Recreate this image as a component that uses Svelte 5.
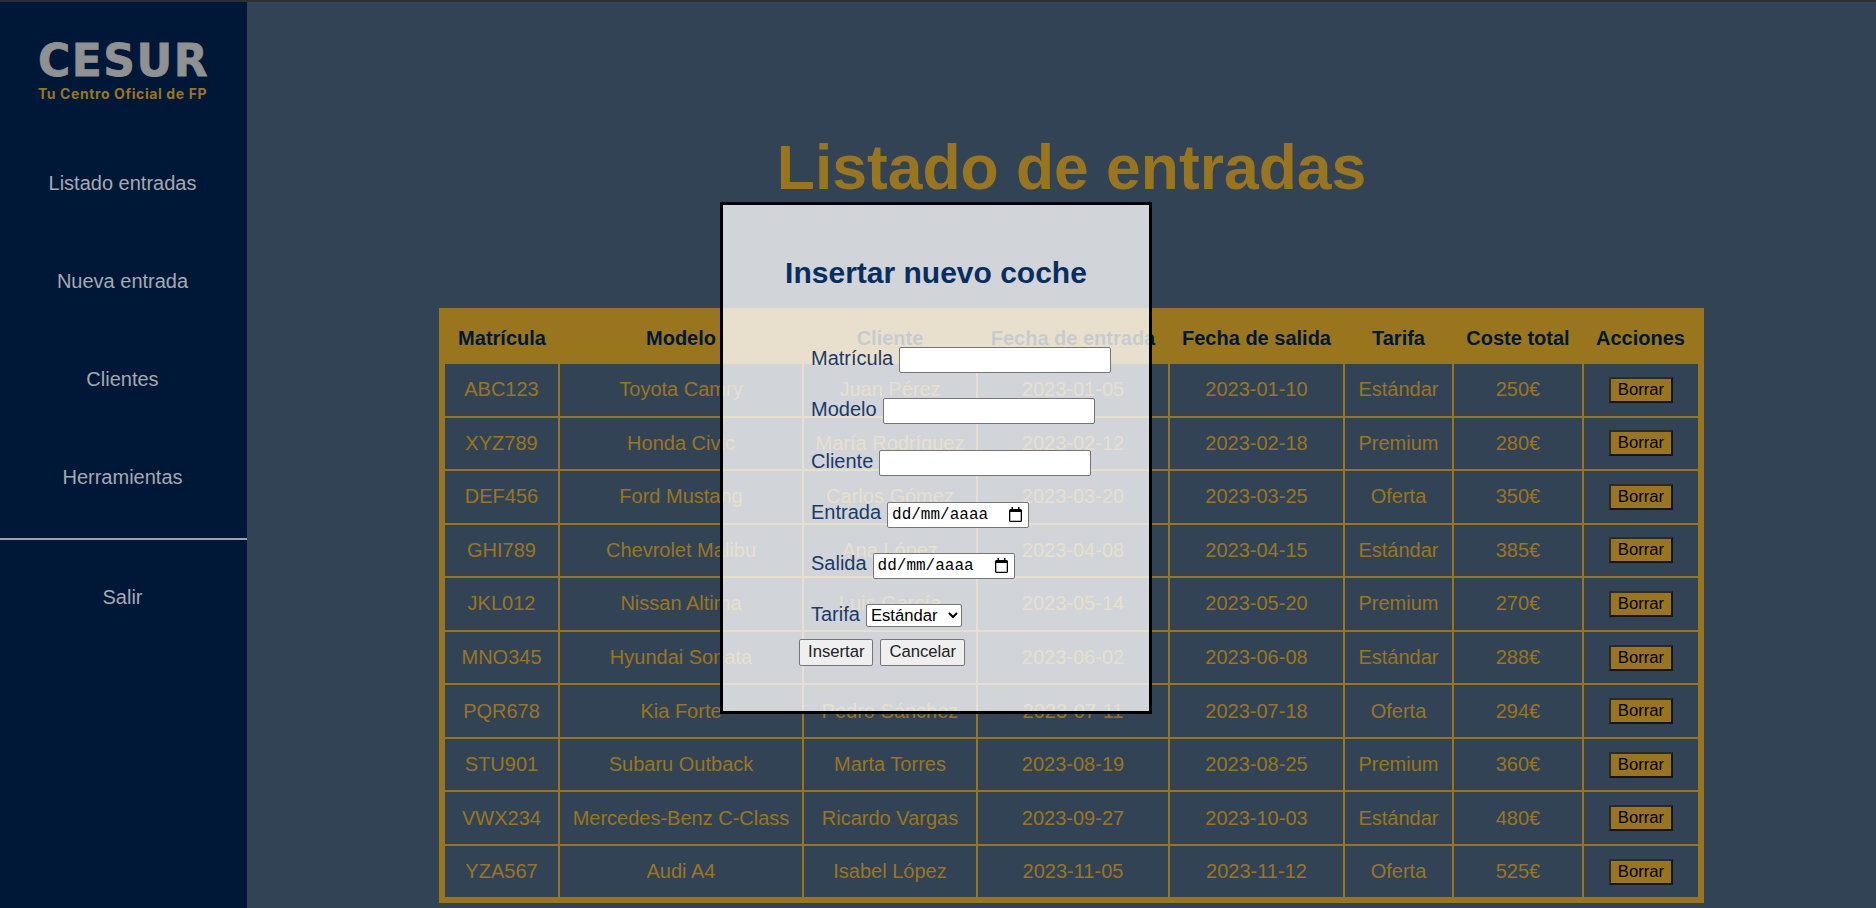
<script lang="ts">
	const entradas = [
		['ABC123', 'Toyota Camry', 'Juan Pérez', '2023-01-05', '2023-01-10', 'Estándar', 250],
		['XYZ789', 'Honda Civic', 'María Rodríguez', '2023-02-12', '2023-02-18', 'Premium', 280],
		['DEF456', 'Ford Mustang', 'Carlos Gómez', '2023-03-20', '2023-03-25', 'Oferta', 350],
		['GHI789', 'Chevrolet Malibu', 'Ana López', '2023-04-08', '2023-04-15', 'Estándar', 385],
		['JKL012', 'Nissan Altima', 'Luis García', '2023-05-14', '2023-05-20', 'Premium', 270],
		['MNO345', 'Hyundai Sonata', 'Laura Martínez', '2023-06-02', '2023-06-08', 'Estándar', 288],
		['PQR678', 'Kia Forte', 'Pedro Sánchez', '2023-07-11', '2023-07-18', 'Oferta', 294],
		['STU901', 'Subaru Outback', 'Marta Torres', '2023-08-19', '2023-08-25', 'Premium', 360],
		['VWX234', 'Mercedes-Benz C-Class', 'Ricardo Vargas', '2023-09-27', '2023-10-03', 'Estándar', 480],
		['YZA567', 'Audi A4', 'Isabel López', '2023-11-05', '2023-11-12', 'Oferta', 525]
	];
	const anchos = [117, 244, 174, 192, 175, 109, 130, 118];
	const columnas = ['Matrícula', 'Modelo', 'Cliente', 'Fecha de entrada', 'Fecha de salida', 'Tarifa', 'Coste total', 'Acciones'];
</script>

<div class="page">
	<aside class="sidebar">
		<div class="logo">
			<div class="logo-name">CESUR</div>
			<div class="logo-sub">Tu Centro Oficial de FP</div>
		</div>
		<nav>
			<a href="#listado">Listado entradas</a>
			<a href="#nueva">Nueva entrada</a>
			<a href="#clientes">Clientes</a>
			<a href="#herramientas">Herramientas</a>
		</nav>
		<hr />
		<a class="salir" href="#salir">Salir</a>
	</aside>

	<main>
		<h1>Listado de entradas</h1>
		<table>
			<colgroup>
				{#each anchos as w}
					<col style="width: {w}px" />
				{/each}
			</colgroup>
			<thead>
				<tr>
					{#each columnas as c}
						<th>{c}</th>
					{/each}
				</tr>
			</thead>
			<tbody>
				{#each entradas as e}
					<tr>
						<td>{e[0]}</td>
						<td>{e[1]}</td>
						<td>{e[2]}</td>
						<td>{e[3]}</td>
						<td>{e[4]}</td>
						<td>{e[5]}</td>
						<td>{e[6]}€</td>
						<td><button type="button" class="borrar">Borrar</button></td>
					</tr>
				{/each}
			</tbody>
		</table>
	</main>

	<div class="modal">
		<h2>Insertar nuevo coche</h2>
		<form>
			<div class="field"><label for="f-mat">Matrícula</label><input id="f-mat" type="text" /></div>
			<div class="field"><label for="f-mod">Modelo</label><input id="f-mod" type="text" /></div>
			<div class="field"><label for="f-cli">Cliente</label><input id="f-cli" type="text" /></div>
			{#each [['f-ent', 'Entrada'], ['f-sal', 'Salida']] as [id, nombre]}
				<div class="field">
					<label for={id}>{nombre}</label>
					<div class="date">
						<input {id} type="text" placeholder="dd/mm/aaaa" />
						<svg width="13" height="15" viewBox="0 0 13 15" aria-hidden="true">
							<path d="M2.500 0H4V2H9V0H10.500V2H11.500A1.500 1.500 0 0 1 13 3.500V13.500A1.500 1.500 0 0 1 11.500 15H1.500A1.500 1.500 0 0 1 0 13.500V3.500A1.500 1.500 0 0 1 1.500 2H2.500ZM1.300 5V13.700H11.700V5Z" fill="#000" fill-rule="evenodd" />
						</svg>
					</div>
				</div>
			{/each}
			<div class="field">
				<label for="f-tar">Tarifa</label>
				<select id="f-tar">
					<option>Estándar</option>
					<option>Premium</option>
					<option>Oferta</option>
				</select>
			</div>
			<div class="actions">
				<button type="button">Insertar</button>
				<button type="button">Cancelar</button>
			</div>
		</form>
	</div>
</div>

<style>
	:global(body) {
		margin: 0;
		background: #334356;
		font-family: 'Liberation Sans', Arial, sans-serif;
	}
	.page {
		position: relative;
		display: flex;
		height: 908px;
		overflow: hidden;
		border-top: 2px solid #2c3036;
		box-sizing: border-box;
	}
	.sidebar {
		width: 247px;
		flex: none;
		background: #001838;
		text-align: center;
	}
	.logo {
		padding-top: 36px;
		height: 132px;
		box-sizing: border-box;
	}
	.logo-name {
		font-family: 'DejaVu Sans', sans-serif;
		font-weight: 700;
		font-size: 44px;
		line-height: 46px;
		letter-spacing: 1.5px;
		-webkit-text-stroke: 0.8px #8f9193;
		color: #8f9193;
	}
	.logo-sub {
		margin-top: 2px;
		font-family: Inter, sans-serif;
		font-weight: 700;
		font-size: 14px;
		line-height: 16px;
		letter-spacing: 0.6px;
		padding-right: 2px;
		color: #99761e;
	}
	nav {
		display: flex;
		flex-direction: column;
	}
	nav a,
	.salir {
		display: block;
		height: 98px;
		line-height: 98px;
		padding-right: 2px;
		font-size: 20px;
		color: #a5a9b0;
		text-decoration: none;
	}
	hr {
		margin: 12px 0 0;
		border: none;
		border-top: 2px solid #9ea3aa;
	}
	.salir {
		margin-top: 8px;
	}
	main {
		flex: 1;
		padding-left: 20px;
		display: flex;
		flex-direction: column;
		align-items: center;
	}
	h1 {
		margin: 131px 0 0;
		height: 175px;
		font-size: 62.4px;
		line-height: 70px;
		font-weight: 700;
		color: #99761e;
	}
	table {
		width: 1259px;
		table-layout: fixed;
		border-collapse: collapse;
		border: 6px solid #99761e;
		font-size: 20px;
		text-align: center;
		color: #99761e;
	}
	th {
		height: 48px;
		padding: 0;
		background: #99761e;
		color: #001838;
		font-weight: 700;
	}
	td {
		height: 51.55px;
		padding: 0;
		border: 2px solid #99761e;
	}
	.borrar {
		padding: 1px 7px;
		font: 16.67px 'Liberation Sans', Arial, sans-serif;
		background: #99761e;
		color: #000;
		border: 2.5px solid;
		border-color: #2a2a2a #151515 #151515 #2a2a2a;
	}
	.modal {
		position: absolute;
		left: 720px;
		top: 200px;
		width: 432px;
		height: 512px;
		box-sizing: border-box;
		border: 3px solid #000;
		background: rgba(255, 255, 255, 0.775);
	}
	h2 {
		margin: 50px 0 0;
		height: 92px;
		font-size: 30px;
		line-height: 36px;
		text-align: center;
		color: #0a2d60;
	}
	form {
		padding-left: 88px;
	}
	.field {
		display: flex;
		align-items: baseline;
		gap: 6px;
		height: 51.3px;
	}
	label {
		font-size: 20px;
		color: #1b3a68;
	}
	input {
		box-sizing: border-box;
		height: 26px;
		padding: 1px 2px;
		font: 16.67px 'Liberation Sans', Arial, sans-serif;
		border: 1px solid #767676;
		border-radius: 2px;
		background: #fff;
	}
	input[type='text'] {
		width: 212px;
	}
	.date {
		position: relative;
		display: flex;
		align-items: baseline;
	}
	.date input[type='text'] {
		width: 142px;
		padding-left: 4px;
		font: 16px 'Liberation Mono', monospace;
	}
	.date input::placeholder {
		color: #000;
		opacity: 1;
	}
	.date svg {
		position: absolute;
		right: 7px;
		top: 5px;
	}
	select {
		height: 23px;
		width: 96px;
		font: 16.67px 'Liberation Sans', Arial, sans-serif;
		border: 1px solid #767676;
		border-radius: 2px;
		background-color: #fff;
	}
	.actions {
		display: flex;
		gap: 7px;
		margin-left: -12px;
		margin-top: -16px;
	}
	.actions button {
		height: 27px;
		padding: 1px 8px;
		font: 16.67px 'Liberation Sans', Arial, sans-serif;
		color: #222;
		background: #efefef;
		border: 1px solid #767676;
		border-radius: 2px;
	}
</style>
